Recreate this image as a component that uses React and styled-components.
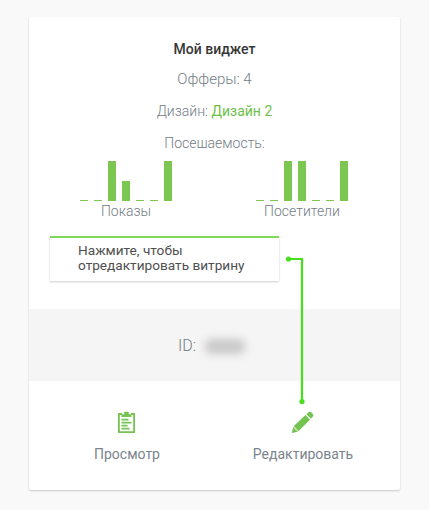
import React from "react";
import styled, { createGlobalStyle } from "styled-components";

const Global = createGlobalStyle`
  body { margin: 0; background: #f9f9f9; font-family: Roboto, "Noto Sans", sans-serif; }
  * { box-sizing: border-box; }
`;
const Page = styled.main`
  width: 429px; height: 510px; padding: 17px 29px 0; background: #f9f9f9; overflow: hidden;
`;
const Card = styled.article`
  position: relative; width: 371px; height: 473px; display: flex; flex-direction: column;
  background: #fff; border-radius: 2px; box-shadow: 0 1px 2px rgba(0, 0, 0, 0.2);
`;
const Summary = styled.section`
  height: 292px; padding-top: 22px; display: flex; flex-direction: column; align-items: center;
`;
const Title = styled.h1`
  margin: 0 0 10px; font-size: 14px; line-height: 20px; font-weight: 500; color: #363636;
`;
const Line = styled.p`
  margin: 0 0 12px; font-size: ${(p) => (p.$large ? 15 : 14)}px; line-height: 20px;
  font-weight: 300; color: #737c84; white-space: pre;
`;
const DesignLink = styled.span`
  color: #6fbf4a; font-weight: 400;
`;
const Charts = styled.div`
  align-self: stretch; display: grid; grid-template-columns: 176px 176px;
  margin-top: -4px; padding-left: 9px;
`;
const Chart = styled.div`
  display: flex; flex-direction: column; align-items: center;
`;
const Bars = styled.div`
  height: 40px; display: flex; align-items: flex-end; gap: 6px;
`;
const Bar = styled.i`
  width: 8px; height: ${(p) => p.$value}px; background: #7cc752;
`;
const ChartLabel = styled.span`
  font-size: 14px; line-height: 20px; font-weight: 300; color: #737c84;
`;
const Hint = styled.div`
  align-self: flex-start; width: 229px; height: 45px; margin: 15px 0 0 21px; padding: 5px 0 0 28px;
  border-top: 2px solid #7ed95a; background: #fff; box-shadow: 0 1px 2px rgba(0, 0, 0, 0.2);
  font-size: 13.65px; line-height: 15px; color: #4f4f4f; white-space: nowrap;
`;
const IdRow = styled.section`
  height: 72px; display: flex; align-items: center; justify-content: flex-start; gap: 9px;
  padding-left: 149px; background: #f5f5f5; font-size: 16px; font-weight: 300; color: #737c84;
`;
const HiddenValue = styled.span`
  width: 40px; height: 15px; margin-top: 2px; border-radius: 6px; background: #c9c9c9; filter: blur(4.5px);
`;
const Actions = styled.nav`
  height: 109px; display: grid; grid-template-columns: 176px 176px; padding: 30px 0 0 10px;
`;
const Action = styled.button`
  display: flex; flex-direction: column; align-items: center; gap: 10px; align-self: start;
  padding: 0; border: 0; background: none; color: #7a848c; font: 400 14px/20px Roboto, sans-serif;
  svg { display: block; }
`;
const Connector = styled.svg`
  position: absolute; left: 255px; top: 236px; pointer-events: none;
`;

const charts = [
  { label: "Показы", values: [1, 1, 40, 20, 1, 1, 40] },
  { label: "Посетители", values: [1, 1, 40, 40, 1, 1, 40] },
];

const ClipboardIcon = () => (
  <svg width="22" height="23" viewBox="0 0 22 23" fill="none" stroke="#75c451">
    <path d="M6 3H2.9V21.1H18.1V3H15" strokeWidth="1.8" />
    <path d="M5.5 6V3.2H8.2V.8H12.8V3.2H15.5V6Z" fill="#75c451" stroke="none" />
    <path d="M5.5 8.7h7M5.5 11.7h10M5.5 14.7h6M5.5 17.7h8" strokeWidth="1.8" />
  </svg>
);
const PencilIcon = () => (
  <svg width="24" height="23" viewBox="0 0 24 23" fill="#75c451">
    <path d="M.8 22 2.1 16.2 6.7 20.8Z" />
    <path d="M2.8 15 14.5 4.1 19 8.7 7.7 19.9Z" />
    <path d="M15.4 3.3 17.7 1.1Q19 .2 20.2 1.2L21.9 3Q22.9 4.2 21.9 5.5L19.8 7.8Z" />
    <path d="M2.1 16.2 6.7 20.8 7.7 19.9 2.8 15Z" fillOpacity=".45" />
  </svg>
);

export default function App() {
  return (
    <>
      <Global />
      <Page>
        <Card>
          <Summary>
            <Title>Мой виджет</Title>
            <Line $large>Офферы: 4</Line>
            <Line>Дизайн: <DesignLink>Дизайн 2</DesignLink></Line>
            <Line>Посешаемость:</Line>
            <Charts>
              {charts.map((c) => (
                <Chart key={c.label}>
                  <Bars>{c.values.map((v, i) => <Bar key={i} $value={v} />)}</Bars>
                  <ChartLabel>{c.label}</ChartLabel>
                </Chart>
              ))}
            </Charts>
            <Hint>Нажмите, чтобы<br />отредактировать витрину</Hint>
          </Summary>
          <IdRow>ID:<HiddenValue /></IdRow>
          <Actions>
            <Action><ClipboardIcon />Просмотр</Action>
            <Action><PencilIcon />Редактировать</Action>
          </Actions>
          <Connector width="24" height="152" viewBox="0 0 24 152">
            <path d="M4.5 6H18V148" fill="none" stroke="#45df1e" strokeWidth="2.2" />
            <circle cx="4.5" cy="6" r="2.6" fill="#45df1e" />
            <circle cx="18" cy="148.5" r="2.6" fill="#45df1e" />
          </Connector>
        </Card>
      </Page>
    </>
  );
}
